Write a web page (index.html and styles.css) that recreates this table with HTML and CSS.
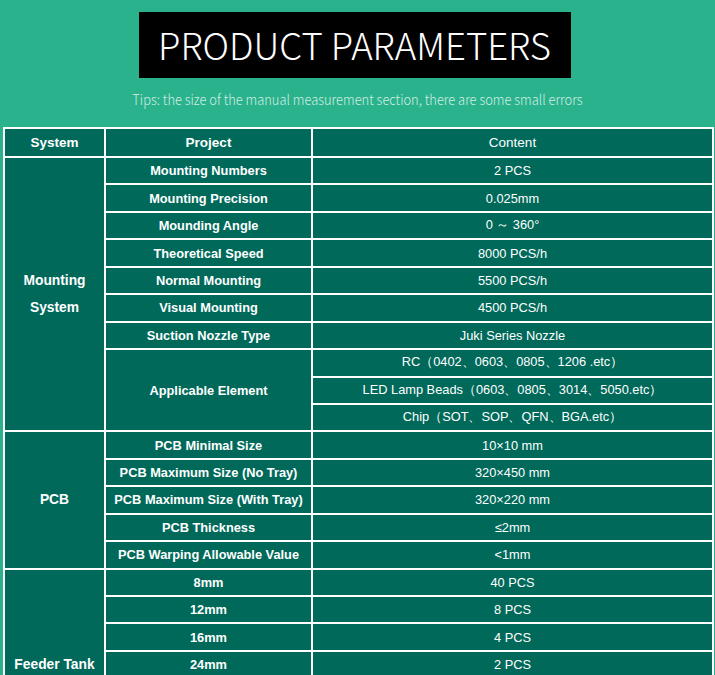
FILE: index.html
```html
<!DOCTYPE html>
<html>
<head>
<meta charset="utf-8">
<link rel="stylesheet" href="styles.css">
</head>
<body>
<div class="page">
  <div class="title-wrap"><h1 class="title">PRODUCT PARAMETERS</h1></div>
  <p class="tips">Tips: the size of the manual measurement section, there are some small errors</p>
  <table class="params">
    <colgroup><col class="c1"><col class="c2"><col class="c3"></colgroup>
    <tr class="head"><th>System</th><th>Project</th><th class="light">Content</th></tr>
    <tr><td rowspan="10" class="sys">Mounting<br>System</td><td class="pj">Mounting Numbers</td><td>2 PCS</td></tr>
    <tr><td class="pj">Mounting Precision</td><td>0.025mm</td></tr>
    <tr><td class="pj">Mounding Angle</td><td>0 ～ 360°</td></tr>
    <tr><td class="pj">Theoretical Speed</td><td>8000 PCS/h</td></tr>
    <tr><td class="pj">Normal Mounting</td><td>5500 PCS/h</td></tr>
    <tr><td class="pj">Visual Mounting</td><td>4500 PCS/h</td></tr>
    <tr><td class="pj">Suction Nozzle Type</td><td>Juki Series Nozzle</td></tr>
    <tr><td rowspan="3" class="pj">Applicable Element</td><td>RC（0402、0603、0805、1206 .etc）</td></tr>
    <tr><td>LED Lamp Beads（0603、0805、3014、5050.etc）</td></tr>
    <tr><td>Chip（SOT、SOP、QFN、BGA.etc）</td></tr>
    <tr><td rowspan="5" class="sys">PCB</td><td class="pj">PCB Minimal Size</td><td>10×10 mm</td></tr>
    <tr><td class="pj">PCB Maximum Size (No Tray)</td><td>320×450 mm</td></tr>
    <tr><td class="pj">PCB Maximum Size (With Tray)</td><td>320×220 mm</td></tr>
    <tr><td class="pj">PCB Thickness</td><td>≤2mm</td></tr>
    <tr><td class="pj">PCB Warping Allowable Value</td><td>&lt;1mm</td></tr>
    <tr><td rowspan="7" class="sys">Feeder Tank</td><td class="pj">8mm</td><td>40 PCS</td></tr>
    <tr><td class="pj">12mm</td><td>8 PCS</td></tr>
    <tr><td class="pj">16mm</td><td>4 PCS</td></tr>
    <tr><td class="pj">24mm</td><td>2 PCS</td></tr>
    <tr><td class="pj">32mm</td><td>2 PCS</td></tr>
    <tr><td class="pj">44mm</td><td>2 PCS</td></tr>
    <tr><td class="pj">56mm</td><td>2 PCS</td></tr>
  </table>
</div>
</body>
</html>
```
FILE: styles.css
```css
html, body {
  margin: 0;
  padding: 0;
  background: #2ab28c;
}
.page {
  padding-top: 12px;
}
.title-wrap {
  display: flex;
  justify-content: center;
}
.title {
  margin: 0 0 0 -6px;
  width: 432px;
  height: 66px;
  background: #000;
  color: #fff;
  font-family: "Noto Sans CJK SC", "Noto Sans", sans-serif;
  font-weight: 300;
  font-size: 36.5px;
  line-height: 66px;
  text-align: center;
  letter-spacing: 0;
}
.tips {
  margin: 11px 0 0 0;
  text-align: center;
  color: #d4ede4;
  font-family: "Noto Sans CJK SC", "Noto Sans", sans-serif;
  font-weight: 300;
  font-size: 14px;
  line-height: 20px;
  transform: scaleX(0.92);
}
.params {
  margin: 18px 0 0 3px;
  width: 709px;
  border-collapse: collapse;
  table-layout: fixed;
  border: 2px solid #fff;
  font-family: "Liberation Sans", Arial, sans-serif;
  font-size: 12.8px;
  color: #fff;
}
.c1 { width: 101px; }
.c2 { width: 207px; }
.c3 { width: 401px; }
.params th, .params td {
  border: 2px solid #fff;
  background: #00695a;
  text-align: center;
  height: 25.45px;
  padding: 0;
}
.params th {
  font-weight: bold;
  font-size: 13.5px;
  height: 27px;
}
.params th.light { font-weight: normal; }
.params td.pj { font-weight: bold; }
.params td.sys {
  font-weight: bold;
  font-size: 13.8px;
  line-height: 27px;
}
```
